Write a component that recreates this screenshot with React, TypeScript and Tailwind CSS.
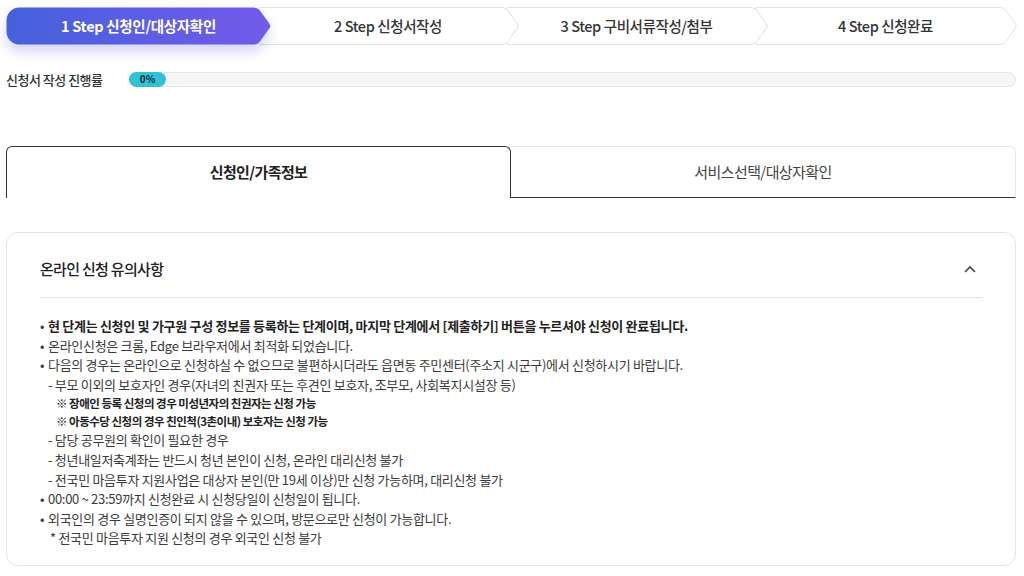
import React from "react";

const H = 38;
const D = 14;

function StepShape({ w, first, active }: { w: number; first?: boolean; active?: boolean }) {
  const h = H;
  const m = h / 2;
  let d: string;
  if (first) {
    const r = 13;
    d = `M ${r} 0.5 H ${w - D - 3} Q ${w - D},0.5 ${w - D + 2.5},3 L ${w - 1.5},${m - 2} Q ${w},${m} ${w - 1.5},${m + 2} L ${w - D + 2.5},${h - 3} Q ${w - D},${h - 0.5} ${w - D - 3},${h - 0.5} H ${r} A ${r} ${r} 0 0 1 0.5,${h - r} V ${r} A ${r} ${r} 0 0 1 ${r},0.5 Z`;
  } else {
    d = `M 3 0.5 H ${w - D - 3} Q ${w - D},0.5 ${w - D + 2.5},3 L ${w - 1.5},${m - 2} Q ${w},${m} ${w - 1.5},${m + 2} L ${w - D + 2.5},${h - 3} Q ${w - D},${h - 0.5} ${w - D - 3},${h - 0.5} H 3 Q 0.5,${h - 0.5} 2,${h - 2.5} L ${D - 1.5},${m + 2} Q ${D},${m} ${D - 1.5},${m - 2} L 2,2.5 Q 0.5,0.5 3,0.5 Z`;
  }
  return (
    <svg
      width={w}
      height={h}
      viewBox={`0 0 ${w} ${h}`}
      className={`absolute inset-0 ${active ? "drop-shadow-[0_7px_7px_rgba(98,92,230,0.28)]" : ""}`}
    >
      <defs>
        <linearGradient id="stepgrad" x1="0" y1="0" x2="1" y2="0">
          <stop offset="0" stopColor="#4561dc" />
          <stop offset="1" stopColor="#735ae9" />
        </linearGradient>
      </defs>
      {active ? (
        <path d={d} fill="url(#stepgrad)" />
      ) : (
        <path d={d} fill="#ffffff" stroke="#e2e2e2" strokeWidth="1" />
      )}
    </svg>
  );
}

const steps = [
  { label: "1 Step 신청인/대상자확인", w: 265 },
  { label: "2 Step 신청서작성", w: 262 },
  { label: "3 Step 구비서류작성/첨부", w: 263 },
  { label: "4 Step 신청완료", w: 263 },
];

export default function App() {
  return (
    <div
      className="w-[1024px] h-[576px] bg-white overflow-hidden text-[#333]"
      style={{ fontFamily: '"Noto Sans CJK KR", "Noto Sans", sans-serif' }}
    >
      <div className="pl-[6px] pr-[8px]">
        {/* steps */}
        <div className="flex pt-[7px]">
          {steps.map((s, i) => (
            <div
              key={i}
              className={`relative h-[38px] shrink-0 flex items-center justify-center ${i > 0 ? "-ml-[14px]" : "z-10"}`}
              style={{ width: s.w }}
            >
              <StepShape w={s.w} first={i === 0} active={i === 0} />
              <span
                className={`relative text-[14.5px] ${
                  i === 0
                    ? "text-white font-bold tracking-[-0.3px]"
                    : "text-[#333] font-medium tracking-[-0.4px]"
                }`}
              >
                {s.label}
              </span>
            </div>
          ))}
        </div>

        {/* progress */}
        <div className="flex items-center mt-[27px] h-[14px]">
          <div className="w-[123px] shrink-0 text-[13px] tracking-[-0.5px] text-[#333] font-medium leading-none">
            신청서 작성 진행률
          </div>
          <div className="flex-1 h-[15px] rounded-full bg-[#f5f5f5] border border-[#e6e6e6] relative">
            <div className="absolute -left-px -top-px h-[15px] w-[37px] rounded-full bg-[#2fc3d6] flex items-center justify-center">
              <span className="text-[10px] font-bold text-[#1c2a36] leading-none">0%</span>
            </div>
          </div>
        </div>

        {/* tabs */}
        <div className="flex mt-[60px] h-[52px]">
          <div className="w-[505px] shrink-0 border-t-[1.5px] border-l-[1.5px] border-r-[1.5px] border-[#333] rounded-t-[6px] flex items-center justify-center">
            <span className="text-[15px] font-bold text-[#222] tracking-[-0.6px]">신청인/가족정보</span>
          </div>
          <div className="flex-1 border-t border-r border-[#e6e6e6] rounded-tr-[6px] border-b-[1.5px] border-b-[#333] flex items-center justify-center">
            <span className="text-[15px] text-[#444] tracking-[-0.6px]">서비스선택/대상자확인</span>
          </div>
        </div>

        {/* card */}
        <div className="mt-[34px] h-[334px] border border-[#e4e4e4] rounded-[12px] px-[33px]">
          <div className="h-[65px] flex items-center justify-between border-b border-[#e2e2e2] pt-[8px]">
            <span className="text-[15px] font-medium text-[#222] tracking-[-0.7px]">온라인 신청 유의사항</span>
            <svg width="14" height="10" viewBox="0 0 14 10" className="mr-[5px]">
              <path d="M2 8 L7 3 L12 8" fill="none" stroke="#444" strokeWidth="1.6" />
            </svg>
          </div>
          <div className="pt-[18px] text-[13px] tracking-[-0.3px] text-[#3a3a3a] leading-[19.6px]">
            <div className="flex">
              <span className="w-[8px] shrink-0">•</span>
              <span className="font-bold text-[#222]">
                현 단계는 신청인 및 가구원 구성 정보를 등록하는 단계이며, 마지막 단계에서 [제출하기] 버튼을 누르셔야 신청이 완료됩니다.
              </span>
            </div>
            <div className="flex">
              <span className="w-[8px] shrink-0">•</span>
              <span>온라인신청은 크롬, Edge 브라우저에서 최적화 되었습니다.</span>
            </div>
            <div className="flex">
              <span className="w-[8px] shrink-0">•</span>
              <span>
                다음의 경우는 온라인으로 신청하실 수 없으므로 불편하시더라도 읍면동 주민센터(주소지 시군구)에서 신청하시기 바랍니다.
              </span>
            </div>
            <div className="pl-[8px]">- 부모 이외의 보호자인 경우(자녀의 친권자 또는 후견인 보호자, 조부모, 사회복지시설장 등)</div>
            <div className="pl-[16px] text-[11.5px] font-bold text-[#222] leading-[18px] tracking-[-0.5px]">
              ※ 장애인 등록 신청의 경우 미성년자의 친권자는 신청 가능
            </div>
            <div className="pl-[16px] text-[11.5px] font-bold text-[#222] leading-[18px] tracking-[-0.5px]">
              ※ 아동수당 신청의 경우 친인척(3촌이내) 보호자는 신청 가능
            </div>
            <div className="pl-[8px]">- 담당 공무원의 확인이 필요한 경우</div>
            <div className="pl-[8px]">- 청년내일저축계좌는 반드시 청년 본인이 신청, 온라인 대리신청 불가</div>
            <div className="pl-[8px]">- 전국민 마음투자 지원사업은 대상자 본인(만 19세 이상)만 신청 가능하며, 대리신청 불가</div>
            <div className="flex">
              <span className="w-[8px] shrink-0">•</span>
              <span>00:00 ~ 23:59까지 신청완료 시 신청당일이 신청일이 됩니다.</span>
            </div>
            <div className="flex">
              <span className="w-[8px] shrink-0">•</span>
              <span>외국인의 경우 실명인증이 되지 않을 수 있으며, 방문으로만 신청이 가능합니다.</span>
            </div>
            <div className="pl-[10px]">* 전국민 마음투자 지원 신청의 경우 외국인 신청 불가</div>
          </div>
        </div>
      </div>
    </div>
  );
}
